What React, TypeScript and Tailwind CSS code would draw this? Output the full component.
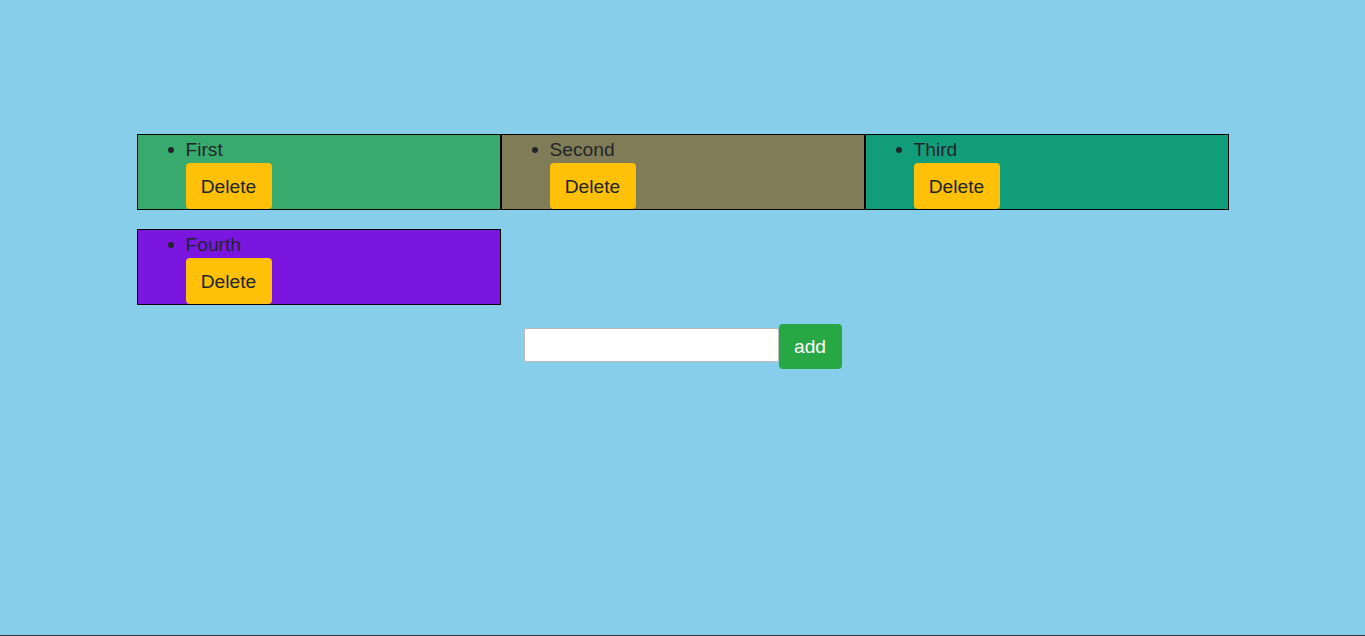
const items = [
  { id: 1, text: "First", color: "bg-[#39aa6d]" },
  { id: 2, text: "Second", color: "bg-[#807c58]" },
  { id: 3, text: "Third", color: "bg-[#129d7a]" },
  { id: 4, text: "Fourth", color: "bg-[#7b16e1]" },
];

export default function App() {
  return (
    <div className="h-[636px] flex flex-col bg-[#87ceeb] font-['Liberation_Sans',Arial,sans-serif] text-[19.2px] text-[#212529] overflow-hidden">
      <div className="flex-1">
        {/* Todo grid */}
        <div className="w-[80%] mx-auto mt-[134px] grid grid-cols-3 gap-y-[19px]">
          {items.map((item) => (
            <div key={item.id} className={`border border-black ${item.color}`}>
              <ul className="list-disc pl-[48px] m-0">
                <li className="leading-[28px]">
                  <span className="relative top-px">{item.text}</span>
                  <div>
                    <button className="h-[46px] w-[86px] pt-[2px] bg-[#ffc107] text-[#212529] rounded-[4px] leading-none">
                      Delete
                    </button>
                  </div>
                </li>
              </ul>
            </div>
          ))}
        </div>

        {/* Add form */}
        <div className="mt-[19px] flex items-start justify-center">
          <input
            type="text"
            className="mt-[4px] w-[255px] h-[34px] bg-white border border-[#bbbbbb] rounded-[2px] outline-none px-1"
          />
          <button className="h-[45px] w-[63px] bg-[#28a745] text-white rounded-[4px] leading-none">
            add
          </button>
        </div>
      </div>
      <div className="h-px bg-[#2d3436]" />
    </div>
  );
}
